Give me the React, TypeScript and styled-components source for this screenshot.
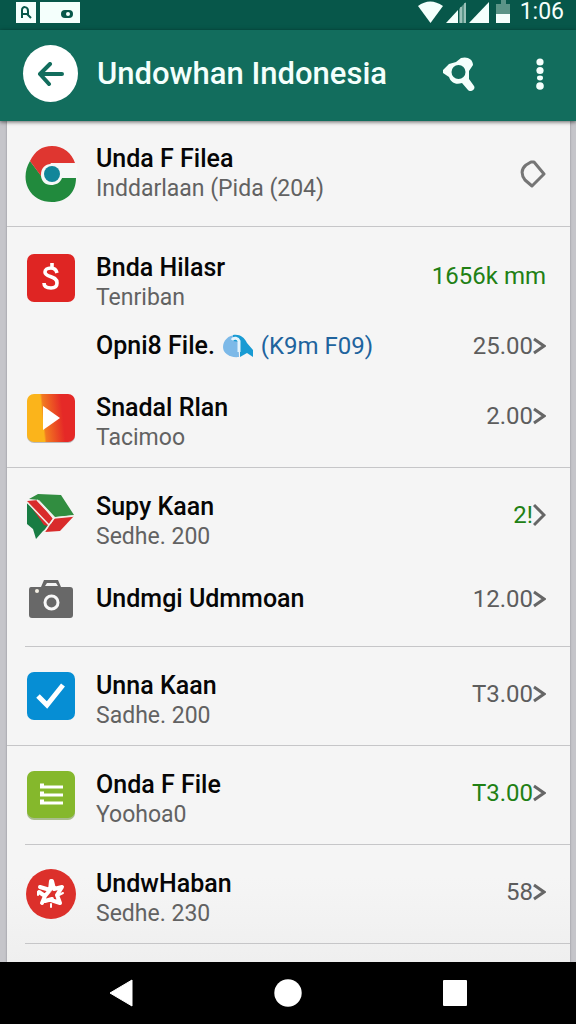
import React from "react";
import styled, { createGlobalStyle } from "styled-components";

const GlobalStyle = createGlobalStyle`
  * { box-sizing: border-box; }
  body {
    margin: 0;
    background: #c5c5ca;
    font-family: Roboto, "Liberation Sans", sans-serif;
  }
  button { border: 0; padding: 0; background: none; color: inherit; font: inherit; cursor: pointer; }
  svg { display: block; flex: none; }
`;

const Screen = styled.div`
  min-height: 100vh;
  display: flex;
  flex-direction: column;
`;

const StatusBar = styled.div`
  height: 30px;
  padding: 0 12px 6px 16px;
  display: flex;
  align-items: center;
  justify-content: space-between;
  background: #07574a;
  color: #f4fffc;
`;

const StatusGroup = styled.div<{ $tight?: boolean }>`
  display: flex;
  align-items: center;
  gap: ${(p) => (p.$tight ? 3 : 4)}px;
`;

const Clock = styled.time`
  margin-left: 3px;
  font-size: 23px;
  line-height: 24px;
`;

const AppBar = styled.header`
  position: relative;
  height: 91px;
  padding: 0 16px 4px 23px;
  display: flex;
  align-items: center;
  background: #126d5d;
  color: #f4fffc;
  box-shadow: 0 1px 4px rgba(0, 0, 0, 0.6);
`;

const BackButton = styled.button`
  width: 55px;
  height: 57px;
  display: grid;
  place-items: center;
  border-radius: 50%;
  && { background: #fff; }
`;

const Title = styled.h1`
  flex: 1;
  margin: 0 0 0 19px;
  font-size: 31px;
  line-height: 40px;
  font-weight: 500;
  white-space: nowrap;
`;

const BarButton = styled.button`
  width: 40px;
  height: 48px;
  display: grid;
  place-items: center;

  & + & { margin-left: 41px; }
`;

const Panel = styled.main`
  flex: 1;
  margin: 0 6px 0 7px;
  background: linear-gradient(#f5f5f5 90%, #efefef);
  box-shadow: 0 0 2px rgba(80, 80, 90, 0.5);
`;

const Group = styled.ul<{ $inset?: boolean; $pad?: string }>`
  margin: 0;
  padding: ${(p) => p.$pad ?? "24px 0 14px"};
  list-style: none;
  border-bottom: 1px solid #c6c6c8;
  ${(p) => p.$inset && "margin-left: 18px; & > li > a { padding-left: 0; }"}
`;

const Item = styled.li<{ $space?: number }>`
  padding-top: ${(p) => p.$space ?? 0}px;
`;

const Row = styled.a<{ $center?: boolean }>`
  padding: 0 24px 0 18px;
  display: flex;
  align-items: ${(p) => (p.$center ? "center" : "flex-start")};
  color: #060606;
  text-decoration: none;
`;

const IconBox = styled.span<{ $short?: boolean }>`
  flex: none;
  width: 52px;
  height: ${(p) => (p.$short ? 30 : 50)}px;
  margin-right: 19px;
  display: flex;
  align-items: center;
  justify-content: center;
`;

const Texts = styled.span`
  flex: 1;
  min-width: 0;
  display: flex;
  flex-direction: column;
`;

const Name = styled.span`
  display: flex;
  align-items: center;
  font-size: 25px;
  line-height: 30px;
  font-weight: 500;
  white-space: nowrap;
`;

const Detail = styled.span`
  color: #626262;
  font-size: 23px;
  line-height: 30px;
  white-space: nowrap;
`;

const Extra = styled.span`
  margin-left: 8px;
  color: #20639d;
  font-size: 24px;
  font-weight: 400;
`;

const Value = styled.span<{ $green?: boolean; $short?: boolean }>`
  height: ${(p) => (p.$short ? 30 : 46)}px;
  display: flex;
  align-items: center;
  color: ${(p) => (p.$green ? "#218014" : "#5d5d5d")};
  font-size: 24px;
  white-space: nowrap;
`;

const NavBar = styled.nav`
  height: 62px;
  padding: 0 37px;
  display: flex;
  align-items: center;
  justify-content: space-around;
  background: #000;
`;

const NavButton = styled.button`
  width: 48px;
  height: 48px;
  display: grid;
  place-items: center;
`;

const Chevron = ({ large }: { large?: boolean }) => (
  <svg width="13" height={large ? 24 : 18} viewBox={large ? "0 0 13 24" : "0 0 13 18"} fill="none" stroke="#666" strokeWidth="3">
    <path d={large ? "M1 2L11 12L1 22" : "M1 2L11 9L1 16"} />
  </svg>
);

const ChromeIcon = () => (
  <svg width="52" height="56" viewBox="0 0 52 56">
    <path d="M5 15C0 23-1 34 3 42C8 52 17 56 27 56C42 56 51 46 51 32H37L26 37L17 31Z" fill="#218a3d" />
    <path d="M5 15C10 5 17 0 27 0C38 0 47 7 50 17H26L16 30Z" fill="#df3630" />
    <path d="M26 18H52V32H37C35 37 31 39 26 39C20 39 16 35 16 29C16 22 20 18 26 18Z" fill="#f6f8f7" />
    <circle cx="27" cy="28" r="8" fill="#11869a" />
  </svg>
);

const DollarIcon = () => (
  <svg width="50" height="50" viewBox="0 0 50 50">
    <rect x="1" y="1" width="48" height="48" rx="7" fill="#df2523" />
    <path d="M31 20C30 16 28 15 25 15C21 15 19 17 19 19C19 25 31 22 31 30C31 34 28 35 25 35C21 35 18 34 18 30M26 10V15" fill="none" stroke="#fff" strokeWidth="3.6" />
  </svg>
);

const PlayIcon = () => (
  <svg width="50" height="50" viewBox="0 0 50 50">
    <defs>
      <linearGradient id="play" x1="0" y1="0.55" x2="1" y2="0.45">
        <stop offset="0.32" stopColor="#fbb41b" />
        <stop offset="0.36" stopColor="#f27a20" />
        <stop offset="0.75" stopColor="#e52927" />
      </linearGradient>
    </defs>
    <rect x="1" y="2" width="48" height="48" rx="7" fill="#bbb" />
    <rect x="1" y="1" width="48" height="48" rx="7" fill="url(#play)" />
    <path d="M17 13L34 25L17 37Z" fill="#fff" />
  </svg>
);

const CubeIcon = () => (
  <svg width="50" height="46" viewBox="0 0 50 46">
    <path d="M3 5L12 0L35 1L48 21L29 23L13 6Z" fill="#318d40" />
    <path d="M1 9L26 31L17 37L10 45L7 35L1 30Z" fill="#187c43" />
    <path d="M1 7L12 6L27 25L22 32L18 31Z" fill="#d92b2b" />
    <path d="M29 24L48 22L34 37L19 38Z" fill="#d92b2b" />
    <path d="M11 6L28 24L48 22M28 24L18 38M1 8L23 31" fill="none" stroke="#f3f0e9" strokeWidth="1.5" />
  </svg>
);

const CameraIcon = () => (
  <svg width="46" height="40" viewBox="0 0 46 40">
    <path d="M3 8H13L16 1H30L33 8H42Q45 8 45 11V36Q45 39 42 39H4Q1 39 1 36V11Q1 8 3 8Z" fill="#686868" />
    <path d="M17 7L19 4H28L30 7Z" fill="#f5f5f5" />
    <circle cx="9" cy="12" r="2" fill="#f5f0e4" />
    <circle cx="23.500" cy="23.500" r="6.500" fill="none" stroke="#f8f8f8" strokeWidth="3" />
  </svg>
);

const CheckIcon = () => (
  <svg width="50" height="50" viewBox="0 0 50 50">
    <rect x="1" y="1" width="48" height="48" rx="7" fill="#068ed4" />
    <path d="M12 25L21 34L37 14" fill="none" stroke="#fff" strokeWidth="5" />
  </svg>
);

const ListIcon = () => (
  <svg width="50" height="50" viewBox="0 0 50 50">
    <rect x="1" y="2" width="48" height="48" rx="7" fill="#a9bd8e" />
    <rect x="1" y="1" width="48" height="47" rx="7" fill="#85b82c" />
    <path d="M14 17H37M14 25H37M14 33H37" stroke="#fff" strokeWidth="3" />
    <path d="M14 15H18M14 23H18M14 31H18" stroke="#fff" strokeWidth="3" />
  </svg>
);

const StarIcon = () => (
  <svg width="52" height="52" viewBox="0 0 52 52">
    <circle cx="26" cy="26" r="25" fill="#dc302b" />
    <path d="M26 13L25 22L15 19M25 22L20 28L17 35M20 28L14 24M26 32L35 35L32 27L37 19L29 21L27 13M20 33L27 31" fill="none" stroke="#fff" strokeWidth="4" strokeLinecap="round" strokeLinejoin="round" />
    <path d="M13 24V27M26 36V39M34 27L38 25" stroke="#fff" strokeWidth="2" strokeLinecap="round" />
  </svg>
);

const GlobeIcon = () => (
  <svg width="30" height="24" viewBox="0 0 30 24">
    <path d="M15 1C6 0 0 6 0 13C0 19 6 24 16 23Z" fill="#7cb9e8" />
    <path d="M10 1C17 0 21 3 24 9L30 16V23L24 19L17 23V8L10 7Z" fill="#189bd3" />
    <path d="M9 6C11 3 15 4 16 7V18" fill="none" stroke="#e5f4fc" strokeWidth="3" />
  </svg>
);

const GlobeSlot = styled.span`
  margin-left: 8px;
`;

const DiamondIcon = () => (
  <svg width="26" height="28" viewBox="0 0 26 28" fill="none" stroke="#757575" strokeWidth="3">
    <path d="M11 2H14L24 14L12 26L5 20C1 15 1 9 6 5Z" strokeLinejoin="round" />
  </svg>
);

type Entry = {
  name: string;
  detail?: string;
  icon?: React.ReactNode;
  value?: string;
  extra?: string;
  green?: boolean;
  end?: "chevron" | "large" | "diamond" | "none";
  center?: boolean;
  space?: number;
};

type Section = { inset?: boolean; pad?: string; entries: Entry[] };

const sections: Section[] = [
  {
    pad: "23px 0 22px",
    entries: [{ name: "Unda F Filea", detail: "Inddarlaan (Pida (204)", icon: <ChromeIcon />, end: "diamond", center: true }],
  },
  {
    entries: [
      { name: "Bnda Hilasr", detail: "Tenriban", icon: <DollarIcon />, value: "1656k mm", green: true, end: "none", space: 2 },
      { name: "Opni8 File.", extra: "(K9m F09)", value: "25.00", center: true, space: 18 },
      { name: "Snadal Rlan", detail: "Tacimoo", icon: <PlayIcon />, value: "2.00", space: 32 },
    ],
  },
  {
    inset: true,
    pad: "24px 0 32px",
    entries: [
      { name: "Supy Kaan", detail: "Sedhe. 200", icon: <CubeIcon />, value: "2!", green: true, end: "large" },
      { name: "Undmgi Udmmoan", icon: <CameraIcon />, value: "12.00", center: true, space: 32 },
    ],
  },
  { entries: [{ name: "Unna Kaan", detail: "Sadhe. 200", icon: <CheckIcon />, value: "T3.00" }] },
  { inset: true, entries: [{ name: "Onda F File", detail: "Yoohoa0", icon: <ListIcon />, value: "T3.00", green: true }] },
  { inset: true, entries: [{ name: "UndwHaban", detail: "Sedhe. 230", icon: <StarIcon />, value: "58" }] },
];

function FileRow({ entry }: { entry: Entry }) {
  const short = !entry.detail;
  const end = entry.end ?? "chevron";
  return (
    <Item $space={entry.space}>
      <Row href="#" $center={entry.center}>
        <IconBox $short={short}>{entry.icon}</IconBox>
        <Texts>
          <Name>
            {entry.name}
            {entry.extra && (
              <>
                <GlobeSlot><GlobeIcon /></GlobeSlot>
                <Extra>{entry.extra}</Extra>
              </>
            )}
          </Name>
          {entry.detail && <Detail>{entry.detail}</Detail>}
        </Texts>
        <Value $green={entry.green} $short={short}>
          {entry.value}
          {end === "diamond" && <DiamondIcon />}
          {(end === "chevron" || end === "large") && <Chevron large={end === "large"} />}
        </Value>
      </Row>
    </Item>
  );
}

export default function App() {
  return (
    <Screen>
      <GlobalStyle />
      <StatusBar>
        <StatusGroup>
          <svg width="20" height="21" viewBox="0 0 20 21">
            <rect width="20" height="21" fill="#f4fffc" />
            <path d="M6 16V8C6 4 12 4 12 9V12H7M11 12L15 16" fill="none" stroke="#07574a" strokeWidth="2" />
          </svg>
          <svg width="40" height="21" viewBox="0 0 40 21">
            <rect width="40" height="21" fill="#f4fffc" />
            <rect x="21" y="8" width="12" height="8" rx="4" fill="#07574a" />
            <circle cx="28" cy="12" r="2" fill="#f4fffc" />
          </svg>
        </StatusGroup>
        <StatusGroup $tight>
          <svg width="25" height="22" viewBox="0 0 25 22"><path d="M0 5Q12 -4 25 5L12.500 22Z" fill="#f4fffc" /></svg>
          <svg width="20" height="22" viewBox="0 0 20 22">
            <path d="M0 22L12 9V22Z" fill="#f4fffc" />
            <path d="M13 8L20 1V22H13Z" fill="#5e978a" />
            <path d="M15 6V22M19 2V22" stroke="#d7ebe6" strokeWidth="1" />
          </svg>
          <svg width="20" height="22" viewBox="0 0 20 22"><path d="M0 22L20 1V22Z" fill="#f4fffc" /></svg>
          <svg width="22" height="24" viewBox="0 0 22 24">
            <path d="M4 4H9V0H14V4H18V14H4Z" fill="#5b9487" />
            <rect x="4" y="14" width="14" height="9" fill="#f4fffc" />
          </svg>
          <Clock>1:06</Clock>
        </StatusGroup>
      </StatusBar>
      <AppBar>
        <BackButton aria-label="Back">
          <svg width="28" height="24" viewBox="0 0 28 24" fill="none" stroke="#126d5d" strokeWidth="4" strokeLinecap="round" strokeLinejoin="round">
            <path d="M13 2L3 12L12 22M3 12H25" />
          </svg>
        </BackButton>
        <Title>Undowhan Indonesia</Title>
        <BarButton aria-label="Search">
          <svg width="34" height="34" viewBox="0 0 34 34">
            <path d="M1 13L7 7L14 5L19 1C25-1 31 2 31 8L27 14L27 22L32 29C34 32 29 36 26 33L20 26C14 28 9 26 7 20L1 16Z" fill="#f4fffc" />
            <circle cx="16.500" cy="15" r="7" fill="#126d5d" />
          </svg>
        </BarButton>
        <BarButton aria-label="More options">
          <svg width="8" height="32" viewBox="0 0 8 32" fill="#f4fffc">
            <circle cx="4" cy="4" r="3.600" />
            <circle cx="4" cy="12.500" r="3.600" />
            <ellipse cx="4" cy="20" rx="3" ry="2.400" />
            <circle cx="4" cy="28" r="3.800" />
          </svg>
        </BarButton>
      </AppBar>
      <Panel>
        {sections.map((section, i) => (
          <Group key={i} $inset={section.inset} $pad={section.pad}>
            {section.entries.map((entry) => (
              <FileRow key={entry.name} entry={entry} />
            ))}
          </Group>
        ))}
      </Panel>
      <NavBar>
        <NavButton aria-label="Back">
          <svg width="24" height="28" viewBox="0 0 24 28"><path d="M1 14L23 1V27Z" fill="#fff" stroke="#fff" strokeLinejoin="round" /></svg>
        </NavButton>
        <NavButton aria-label="Home">
          <svg width="28" height="28" viewBox="0 0 28 28"><circle cx="14" cy="14" r="13.700" fill="#fff" /></svg>
        </NavButton>
        <NavButton aria-label="Recent apps">
          <svg width="24" height="26" viewBox="0 0 24 26"><rect width="24" height="26" rx="1" fill="#fff" /></svg>
        </NavButton>
      </NavBar>
    </Screen>
  );
}
